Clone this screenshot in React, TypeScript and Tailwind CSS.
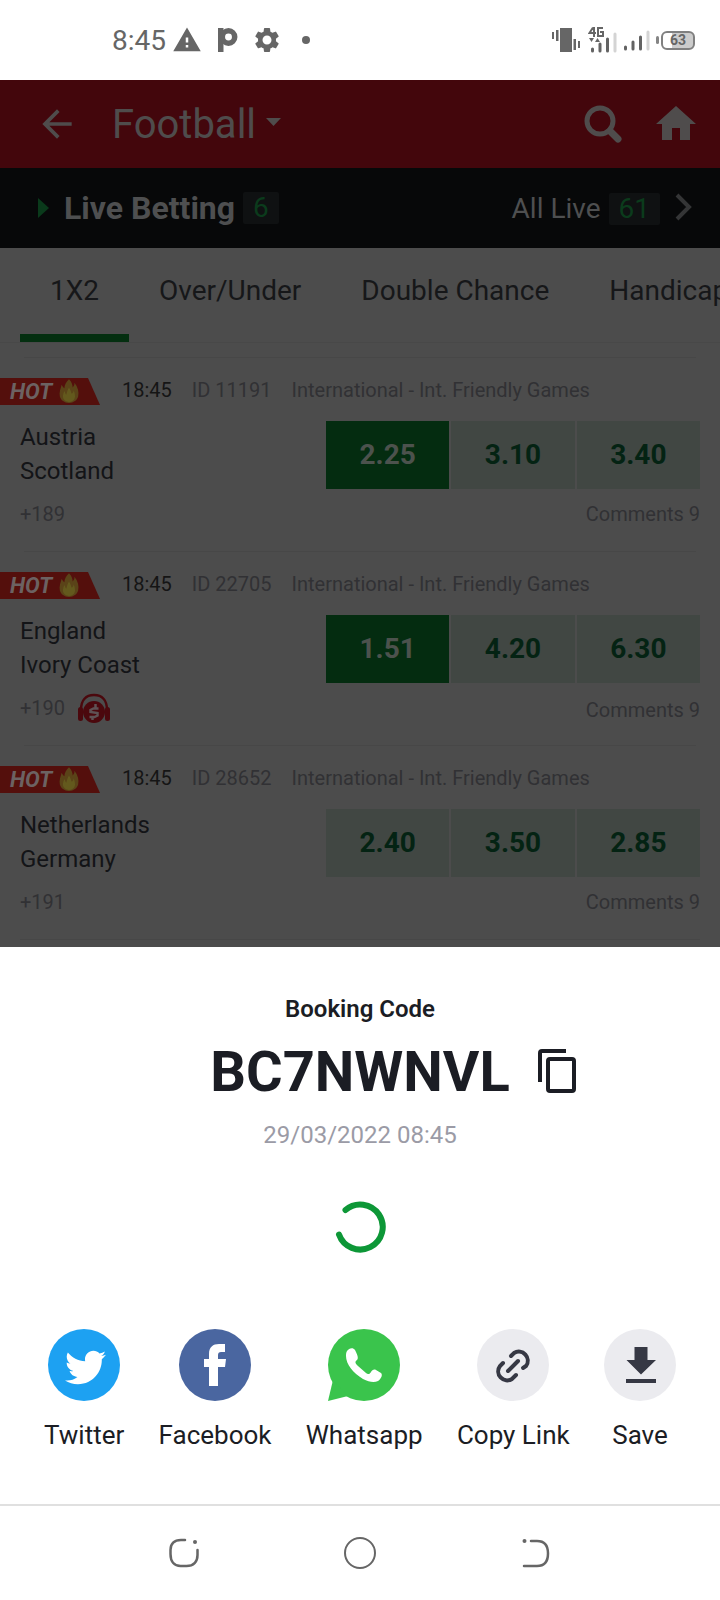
import React, { useState } from 'react'
import { MdArrowBack, MdHome, MdSettings, MdWarning } from 'react-icons/md'
import { FaTwitter } from 'react-icons/fa'

interface Match {
  id: string
  time: string
  home: string
  away: string
  odds: string[]
  picked?: number
  markets: string
  audio?: boolean
}

const matches: Match[] = [
  { id: '11191', time: '18:45', home: 'Austria', away: 'Scotland', odds: ['2.25', '3.10', '3.40'], picked: 0, markets: '+189' },
  { id: '22705', time: '18:45', home: 'England', away: 'Ivory Coast', odds: ['1.51', '4.20', '6.30'], picked: 0, markets: '+190', audio: true },
  { id: '28652', time: '18:45', home: 'Netherlands', away: 'Germany', odds: ['2.40', '3.50', '2.85'], markets: '+191' },
]

const tabs = ['1X2', 'Over/Under', 'Double Chance', 'Handicap']

function SignalBars() {
  return (
    <svg width="26" height="21" viewBox="0 0 26 21" strokeWidth="3" strokeLinecap="round">
      <path d="M1.5 17v2M9 12v7M16.500 7v12" stroke="#636363" />
      <path d="M24 2v17" stroke="#d4d4d4" />
    </svg>
  )
}

function StatusBar() {
  return (
    <div className="flex h-20 items-center justify-between bg-white pr-6 pl-28 text-[#666]">
      <div className="flex items-center">
        <span className="pt-0.5 text-[28px] leading-8">8:45</span>
        <MdWarning className="ml-1.5 size-[30px]" />
        <svg className="ml-4 h-6 w-5" viewBox="0 0 20 24" fill="none">
          <path d="M0 0h5.500v24H0V5Z" fill="currentColor" />
          <circle cx="10.500" cy="9" r="6.200" stroke="currentColor" strokeWidth="5.500" />
        </svg>
        <MdSettings className="ml-3.5 size-[30px]" />
        <span className="ml-5 size-2 rounded-full bg-[#666]" />
      </div>
      <div className="flex items-center">
        <svg width="28" height="24" viewBox="0 0 28 24" fill="#666">
          <path d="M8 0h12v24H8zM0 4h2v7H0zM4 2h2.500v11H4zM21.500 11H24v11h-2.500zM26 13h2v7h-2z" />
        </svg>
        <div className="ml-2 flex h-7 w-7.5 flex-col justify-end">
          <svg width="29" height="28" viewBox="0 0 29 28" fill="none">
            <path d="M5 1.500L1.500 7H8M6 1v10M15 2h-5v8h5V6h-3" stroke="#666" strokeWidth="2" />
            <path d="M1 12h5l-2.500 4zM7 16h5l-2.500-4z" fill="#666" />
            <path d="M4.500 23v2M12 18v7M19.500 13v12" stroke="#636363" strokeWidth="3" strokeLinecap="round" />
            <path d="M27 8v17" stroke="#d4d4d4" strokeWidth="3" strokeLinecap="round" />
          </svg>
        </div>
        <div className="ml-1.5">
          <SignalBars />
        </div>
        <span className="ml-1.5 h-2 w-[3px] rounded-full bg-[#858585]" />
        <span className="ml-0.5 mr-px flex h-[19px] w-[34px] items-center justify-center rounded-md border-2 border-[#808080] bg-linear-to-r from-white from-30% to-[#ccc] to-30% text-sm leading-4 font-bold">
          63
        </span>
      </div>
    </div>
  )
}

function Header() {
  return (
    <header className="flex h-22 items-center bg-[#43060c] pr-5 pl-[35px] text-[#4f4c4c]">
      <button aria-label="Back">
        <MdArrowBack className="size-11" />
      </button>
      <button className="ml-[33px] flex items-center pt-0.5 text-[40px] leading-12">
        Football
        <svg className="mb-1.5 ml-2.5" width="15" height="8" viewBox="0 0 15 8">
          <path d="M0 0h15L7.500 8z" fill="currentColor" />
        </svg>
      </button>
      <button aria-label="Search" className="ml-auto">
        <svg width="38" height="38" viewBox="0 0 38 38" fill="none" stroke="currentColor">
          <circle cx="16" cy="16" r="13" strokeWidth="5" />
          <path d="M26 26l8 8" strokeWidth="7" strokeLinecap="round" />
        </svg>
      </button>
      <button aria-label="Home" className="ml-[30px]">
        <MdHome className="size-12" />
      </button>
    </header>
  )
}

function LiveBar() {
  return (
    <div className="flex h-20 items-center justify-between bg-[#070809] pr-7 pl-[38px] text-[#4e4f50]">
      <div className="flex items-center">
        <svg width="11" height="20" viewBox="0 0 11 20">
          <path d="M0 0l11 10L0 20z" fill="#0a3a1b" />
        </svg>
        <h2 className="ml-[15px] text-[32px] leading-9 font-bold">Live Betting</h2>
        <span className="ml-2 rounded-xs bg-[#0f1112] px-2.5 text-[28px] leading-8 text-[#0b3b1c]">6</span>
      </div>
      <a href="#live" className="flex items-center pt-0.5 text-[28px] leading-8">
        All Live
        <span className="ml-2 rounded-xs bg-[#0f1112] px-2.5 text-[#0b3b1c]">61</span>
        <svg className="mb-1 ml-[15px]" width="17" height="28" viewBox="0 0 17 28" fill="none">
          <path d="M2 2l12 12L2 26" stroke="#343536" strokeWidth="4" />
        </svg>
      </a>
    </div>
  )
}

function HotBadge() {
  return (
    <div className="flex h-[27px] w-[100px] items-center bg-[#540f0c] pl-2.5 [clip-path:polygon(0_0,88%_0,100%_100%,0_100%)]">
      <span className="text-[22px] leading-6 font-bold text-[#6c6262] italic">HOT</span>
      <svg className="ml-1.5" width="22" height="27" viewBox="0 0 24 27">
        <path d="M12 0c3 3 4 6 4 9 1-1 2-2 2-5 4 5 5 10 4 15-1 4-5 7-10 7S3 23 2 19C1 14 3 10 4 6c1 2 2 3 3 4 0-4 2-7 5-10z" fill="#5a4318" />
        <path d="M12 9c2 3 2 5 3 7 1-1 2-2 2-4 3 7 2 12-5 13-7-1-8-6-5-12 1 2 1 3 2 4 1-3 1-5 3-8z" fill="#63591d" />
      </svg>
    </div>
  )
}

function AudioIcon() {
  return (
    <svg width="34" height="30" viewBox="0 0 34 30" fill="none">
      <path d="M4 17C4 7 9 2 17 2s13 5 13 15" stroke="#4b080d" strokeWidth="2.500" />
      <rect x="1" y="14" width="5" height="14" rx="2.500" fill="#4b080d" />
      <rect x="28" y="14" width="5" height="14" rx="2.500" fill="#4b080d" />
      <circle cx="17" cy="19" r="11" fill="#4b080d" />
      <path d="M21.500 15.500h-5l-3 1.500v2l7 1v2.500l-3 1.500h-5M18.500 11v4M15.500 24v3" stroke="#5f5254" strokeWidth="2.500" />
    </svg>
  )
}

function MatchRow({ match }: { match: Match }) {
  const [picked, setPicked] = useState(match.picked)

  return (
    <article>
      <div className="mx-6 h-px bg-[#474747]" />
      <div className="flex items-start pt-5">
        <HotBadge />
        <div className="flex gap-5 pl-[22px] text-xl leading-6 text-[#313134]">
          <span className="text-[#151515]">{match.time}</span>
          <span>ID {match.id}</span>
          <span>International - Int. Friendly Games</span>
        </div>
      </div>
      <div className="flex justify-between px-5 pt-[15px]">
        <div className="text-2xl leading-[34px] text-[#131417]">
          <p>{match.home}</p>
          <p>{match.away}</p>
        </div>
        <div className="mt-px grid w-[55%] grid-cols-3 gap-0.5">
          {match.odds.map((odd, i) => (
            <button
              key={i}
              onClick={() => setPicked(picked === i ? undefined : i)}
              className={`h-17 text-[28px] leading-8 font-bold ${
                picked === i ? 'bg-[#042c10] text-[#4c524d]' : 'bg-[#414743] text-[#042313]'
              }`}
            >
              {odd}
            </button>
          ))}
        </div>
      </div>
      <div className="mb-3 flex h-[50px] items-center justify-between px-5 text-xl leading-6 text-[#313134]">
        <div className="flex items-center gap-3">
          <span>{match.markets}</span>
          {match.audio && <AudioIcon />}
        </div>
        <a href="#comments" className={match.audio ? 'pt-1' : ''}>
          Comments 9
        </a>
      </div>
    </article>
  )
}

function ShareButton({ label, children }: { label: string; children: React.ReactNode }) {
  return (
    <button className="flex flex-col items-center gap-[18px] text-[26px] leading-8">
      {children}
      {label}
    </button>
  )
}

function BookingSheet() {
  return (
    <section className="bg-white pt-[46px] pb-[53px] text-center text-[#1b1d24]">
      <h3 className="text-2xl leading-8 font-semibold">Booking Code</h3>
      <div className="mt-[15px] grid grid-cols-[1fr_auto_1fr] items-center gap-6">
        <span className="col-start-2 text-[56px] leading-16 font-bold">BC7NWNVL</span>
        <button aria-label="Copy code" className="justify-self-start">
          <svg width="48" height="48" viewBox="0 0 48 48" fill="none" stroke="currentColor" strokeWidth="4">
            <path d="M6 34V5a2 2 0 0 1 2-2h24" />
            <rect x="14" y="11" width="26" height="32" rx="2" />
          </svg>
        </button>
      </div>
      <p className="mt-[15px] text-2xl leading-8 text-[#9b9ba6]">29/03/2022 08:45</p>

      <svg className="mx-auto mt-[50px]" width="52" height="52" viewBox="0 0 52 52" fill="none">
        <path d="M11.500 9A22.500 22.500 0 1 1 5 33.500" stroke="#0d9737" strokeWidth="6" strokeLinecap="round" />
      </svg>

      <div className="mt-[76px] flex justify-between px-11">
        <ShareButton label="Twitter">
          <span className="flex size-18 items-center justify-center rounded-full bg-[#1da1f2] pt-1 pl-0.5 text-white">
            <FaTwitter className="size-[41px]" />
          </span>
        </ShareButton>
        <ShareButton label="Facebook">
          <svg className="size-18" viewBox="0 0 72 72">
            <circle cx="36" cy="36" r="36" fill="#4a66a0" />
            <path d="M30 57V38h-5v-8h5v-5c0-7 4-10 10-10h6v8h-4c-2 0-3 1-3 3v4h8l-1 8h-7v19z" fill="#fff" />
          </svg>
        </ShareButton>
        <ShareButton label="Whatsapp">
          <svg className="size-18" viewBox="0 0 72 72">
            <circle cx="36" cy="36" r="36" fill="#3ac44c" />
            <path d="M5 51L0 72l20-5z" fill="#3ac44c" />
            <path
              d="M19 22c2-3 6-4 8-1 2 4 4 8 2 10-3 2-1 4 1 6l8 7c2 2 4 1 5-1s3-3 5-2l5 3c2 2 0 6-3 8-4 2-9 1-15-2C25 44 18 35 18 27c0-2 0-3 1-5z"
              fill="#fff"
            />
          </svg>
        </ShareButton>
        <ShareButton label="Copy Link">
          <svg className="size-18" viewBox="0 0 72 72" fill="none">
            <circle cx="36" cy="36" r="36" fill="#ebebef" />
            <g stroke="#363844" strokeWidth="4" strokeLinecap="round">
              <path d="M34 27l3-3a9 9 0 0 1 12 13l-3 2" />
              <path d="M26 34l-3 3a9 9 0 0 0 12 13l4-4" />
              <path d="M31 42l10-10" />
            </g>
          </svg>
        </ShareButton>
        <ShareButton label="Save">
          <svg className="size-18" viewBox="0 0 72 72">
            <circle cx="36" cy="36" r="36" fill="#ebebef" />
            <path d="M30.500 18h13v13H52L37 45.500 22.500 31h8zM22 50h30v4H22z" fill="#363844" />
          </svg>
        </ShareButton>
      </div>
    </section>
  )
}

function NavBar() {
  return (
    <nav className="border-t-2 border-[#e0e0e0] bg-white px-24">
      <div className="grid h-[94px] grid-cols-3 place-items-center">
        <button aria-label="Recent apps">
          <svg width="32" height="32" viewBox="0 0 32 32" fill="none" stroke="#666" strokeWidth="2.500" strokeLinecap="round">
            <path d="M17 3h-4C6 3 2.500 7 2.500 13v4c0 8 4 12 10 12h6c7 0 11-4 11-11v-5" />
            <circle cx="27" cy="5" r="2" fill="#666" stroke="none" />
          </svg>
        </button>
        <button aria-label="Home screen" className="size-8 rounded-full border-2 border-[#666]" />
        <button aria-label="Go back">
          <svg width="32" height="32" viewBox="0 0 32 32" fill="none" stroke="#666" strokeWidth="2.500" strokeLinecap="round">
            <path d="M11 4h6c8 0 11 5 11 12.500S25 29 17 29H4" />
            <circle cx="4.500" cy="4" r="2" fill="#666" stroke="none" />
          </svg>
        </button>
      </div>
    </nav>
  )
}

export default function App() {
  const [activeTab, setActiveTab] = useState('1X2')

  return (
    <div className="min-h-screen overflow-hidden bg-white font-[Roboto,'Liberation_Sans',sans-serif]">
      <StatusBar />
      <Header />
      <LiveBar />

      <main className="bg-[#4c4c4c] pb-[7px]">
        <div className="flex overflow-x-auto border-b border-[#484848] pl-5 [scrollbar-width:none]">
          {tabs.map(tab => (
            <button
              key={tab}
              onClick={() => setActiveTab(tab)}
              className={`shrink-0 border-b-8 px-[30px] pt-[23px] pb-[23px] text-[28px] leading-10 text-[#161719] ${
                activeTab === tab ? 'border-[#042f10]' : 'border-transparent'
              }`}
            >
              {tab}
            </button>
          ))}
        </div>
        <div className="pt-3.5">
          {matches.map(match => (
            <MatchRow key={match.id} match={match} />
          ))}
        </div>
        <div className="mx-5 h-px bg-[#474747]" />
      </main>

      <BookingSheet />
      <NavBar />
    </div>
  )
}
